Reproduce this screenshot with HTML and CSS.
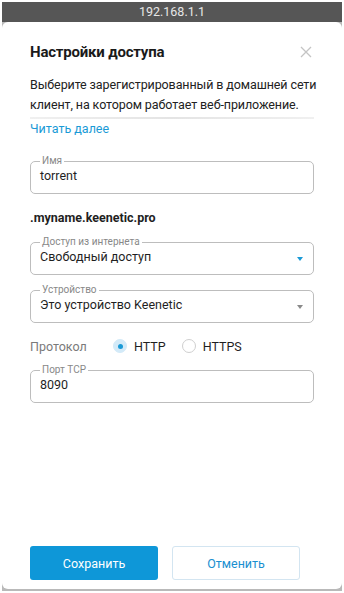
FILE: index.html
```html
<!DOCTYPE html>
<html lang="ru">
<head>
<meta charset="UTF-8">
<meta name="viewport" content="width=device-width, initial-scale=1.0">
<title>Настройки доступа</title>
<link rel="stylesheet" href="styles.css">
</head>
<body>

<div class="frame">
    <div class="address-bar">192.168.1.1</div>

    <div class="sheet">
        <div class="sheet-head">
            <h1>Настройки доступа</h1>
            <svg class="close" width="12" height="12" viewBox="0 0 12 12">
                <path d="M1 1L11 11M11 1L1 11" stroke="#c4c4c4" stroke-width="1.3" fill="none"/>
            </svg>
        </div>

        <p class="desc">Выберите зарегистрированный в домашней сети клиент, на котором работает веб-приложение.</p>
        <div class="divider"></div>
        <a href="#" class="more">Читать далее</a>

        <fieldset class="field field-name">
            <legend>Имя</legend>
            <div class="value">torrent</div>
        </fieldset>

        <div class="domain">.myname.keenetic.pro</div>

        <fieldset class="field field-access">
            <legend>Доступ из интернета</legend>
            <div class="value">Свободный доступ</div>
            <span class="arrow arrow-blue"></span>
        </fieldset>

        <fieldset class="field field-device">
            <legend>Устройство</legend>
            <div class="value">Это устройство Keenetic</div>
            <span class="arrow"></span>
        </fieldset>

        <div class="protocol">
            <span class="protocol-label">Протокол</span>
            <label class="radio checked"><span class="dot"></span>HTTP</label>
            <label class="radio"><span class="dot"></span>HTTPS</label>
        </div>

        <fieldset class="field field-port">
            <legend>Порт TCP</legend>
            <div class="value">8090</div>
        </fieldset>

        <div class="actions">
            <button class="btn btn-save">Сохранить</button>
            <button class="btn btn-cancel">Отменить</button>
        </div>
    </div>
</div>

</body>
</html>
```

FILE: styles.css
```css
body {
    margin: 0;
    background: #ffffff;
    font-family: Roboto, "Liberation Sans", Arial, sans-serif;
    color: #1f1f1f;
}
.frame {
    margin: 2px 2px 0;
    height: 589px;
    background: #b9b9b9;
    display: flex;
    flex-direction: column;
}
.address-bar {
    height: 20px;
    line-height: 20px;
    background: #565656;
    color: #e6e6e6;
    font-size: 12.5px;
    text-align: center;
}
.sheet {
    flex: 1;
    background: #ffffff;
    border-radius: 6px;
    margin-bottom: 2px;
    padding: 18px 28px 9px 28px;
    display: flex;
    flex-direction: column;
}
.sheet-head {
    display: flex;
    justify-content: space-between;
    align-items: center;
    height: 24px;
}
.sheet-head h1 {
    margin: 0;
    font-size: 15px;
    font-weight: 700;
    letter-spacing: -0.2px;
    color: #1a1a1a;
}
.close {
    margin-right: 2px;
}
.desc {
    margin: 11px -8px 0 0;
    font-size: 12.5px;
    letter-spacing: -0.1px;
    line-height: 20px;
    color: #222;
}
.divider {
    height: 2px;
    margin-top: 2px;
    background: linear-gradient(to right, #f0f0f0, #e4e4e4 50%, #f0f0f0);
}
.more {
    display: block;
    margin-top: 1px;
    font-size: 12.5px;
    line-height: 18px;
    color: #1a9ad6;
    text-decoration: none;
}
.field {
    position: relative;
    margin: 0;
    padding: 0 9px 8px;
    border: 1px solid #bdbdbd;
    border-radius: 5px;
    min-width: 0;
}
.field legend {
    font-size: 10px;
    line-height: 12px;
    padding: 0 2px;
    margin-left: 0;
    color: #888;
}
.field .value {
    font-size: 12.5px;
    line-height: 18px;
    color: #1f1f1f;
}
.field-name {
    margin-top: 17px;
}
.domain {
    margin-top: 15px;
    font-size: 12.5px;
    font-weight: 700;
    line-height: 18px;
    color: #1f1f1f;
}
.field-access {
    margin-top: 9px;
}
.field-device {
    margin-top: 9px;
}
.arrow {
    position: absolute;
    right: 10px;
    top: 9px;
    width: 0;
    height: 0;
    border-left: 3px solid transparent;
    border-right: 3px solid transparent;
    border-top: 4px solid #8a8a8a;
}
.arrow-blue {
    border-top-color: #1a9ad6;
}
.protocol {
    margin-top: 13px;
    display: flex;
    align-items: center;
    height: 20px;
    font-size: 12.5px;
}
.protocol-label {
    color: #7a7a7a;
    width: 83px;
}
.radio {
    display: flex;
    align-items: center;
    color: #1f1f1f;
    margin-right: 16px;
}
.radio .dot {
    width: 12px;
    height: 12px;
    border: 1px solid #cfcfcf;
    border-radius: 50%;
    margin-right: 7px;
    position: relative;
}
.radio.checked .dot {
    background: #d3eaf8;
    border-color: #d3eaf8;
}
.radio.checked .dot::after {
    content: "";
    position: absolute;
    left: 3.5px;
    top: 3.5px;
    width: 5px;
    height: 5px;
    border-radius: 50%;
    background: #1a9ad6;
}
.field-port {
    margin-top: 8px;
}
.actions {
    margin-top: auto;
    display: flex;
    gap: 14px;
}
.btn {
    width: 128px;
    height: 34px;
    border-radius: 3px;
    font-family: inherit;
    font-size: 12.5px;
    cursor: pointer;
}
.btn-save {
    background: #0e97d8;
    color: #ffffff;
    border: none;
}
.btn-cancel {
    background: #ffffff;
    color: #1a8fd0;
    border: 1px solid #d3e5f1;
}
```
